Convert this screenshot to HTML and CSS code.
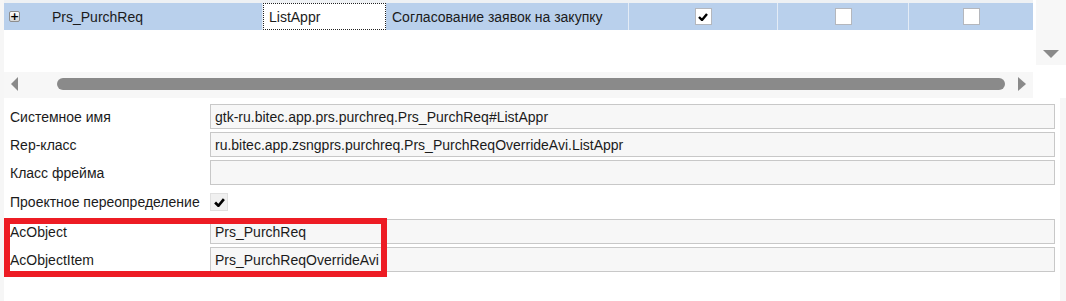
FILE: index.html
```html
<!DOCTYPE html>
<html lang="ru">
<head>
<meta charset="UTF-8" />
<title>ListAppr</title>
<link rel="stylesheet" href="styles.css">
</head>
<body>
  <div class="table">
    <div class="table-main">
      <div class="table-top"></div>
      <div class="row">
        <div class="cell cell-name">
          <span class="expander">+</span>
          <span>Prs_PurchReq</span>
        </div>
        <div class="cell cell-code">ListAppr</div>
        <div class="cell cell-caption">Согласование заявок на закупку</div>
        <div class="cell cell-check c4">
          <span class="check"><svg viewBox="0 0 10 8" width="10" height="8"><path d="M1 4 L4 7 L9 1" fill="none" stroke="#000" stroke-width="2.4"/></svg></span>
        </div>
        <div class="cell cell-check c5"><span class="check"></span></div>
        <div class="cell cell-check c6"><span class="check"></span></div>
      </div>
      <div class="table-empty"></div>
      <div class="hscroll">
        <span class="arrow arrow-left"></span>
        <div class="thumb"></div>
        <span class="arrow arrow-right"></span>
      </div>
    </div>
    <div class="vscroll">
      <div class="vscroll-track"><span class="arrow arrow-down"></span></div>
    </div>
  </div>

  <div class="form">
    <div class="form-row">
      <label>Системное имя</label>
      <div class="field">gtk-ru.bitec.app.prs.purchreq.Prs_PurchReq#ListAppr</div>
    </div>
    <div class="form-row">
      <label>Rep-класс</label>
      <div class="field">ru.bitec.app.zsngprs.purchreq.Prs_PurchReqOverrideAvi.ListAppr</div>
    </div>
    <div class="form-row">
      <label>Класс фрейма</label>
      <div class="field"></div>
    </div>
    <div class="form-row row-check">
      <label>Проектное переопределение</label>
      <span class="flag"><svg viewBox="0 0 10 8" width="11" height="9"><path d="M1 4 L4 7 L9 1" fill="none" stroke="#000" stroke-width="2.4"/></svg></span>
    </div>
    <div class="form-row">
      <label>AcObject</label>
      <div class="field">Prs_PurchReq</div>
    </div>
    <div class="form-row">
      <label>AcObjectItem</label>
      <div class="field">Prs_PurchReqOverrideAvi</div>
    </div>
    <div class="highlight"></div>
  </div>
</body>
</html>
```

FILE: styles.css
```css
:root {
  --row-blue: #b9d0ec;
  --field-bg: #f7f7f7;
  --field-border: #c8c8c8;
  --scroll: #8a8a8a;
  --mark-red: #ed1c24;
}
body {
  margin: 0;
  font-family: 'Liberation Sans', Arial, sans-serif;
  font-size: 14px;
  color: #1b1b1b;
  background: #f6f6f6;
  width: 1066px;
  height: 301px;
  overflow: hidden;
}
.table {
  display: flex;
  height: 98px;
}
.table-main {
  width: 1029px;
  margin-left: 4px;
  background: #fff;
  display: flex;
  flex-direction: column;
}
.table-top {
  height: 3px;
  background: #eef1f4;
}
.row {
  display: flex;
  height: 27px;
  background: var(--row-blue);
}
.cell {
  display: flex;
  align-items: center;
  border-right: 1px solid #e4ecf6;
  box-sizing: border-box;
}
.cell-name { width: 259px; padding-left: 5px; }
.cell-name span:last-child { margin-left: 32px; }
.cell-code {
  width: 123px;
  background: #fff;
  border: 1px dotted #222;
  padding-left: 5px;
}
.cell-caption { width: 243px; padding-left: 6px; }
.cell-check { justify-content: center; }
.c4 { width: 149px; }
.c5 { width: 131px; }
.c6 { width: 124px; border-right: none; }
.expander {
  width: 9px;
  height: 9px;
  border: 1px solid #8d8d8d;
  border-radius: 2px;
  background: linear-gradient(#fdfdfd, #d6d6d6);
  font: bold 11px/9px 'DejaVu Sans', sans-serif;
  text-align: center;
  color: #000;
}
.check {
  width: 15px;
  height: 15px;
  background: #fff;
  border: 1px solid #b4b7bd;
  display: flex;
  align-items: center;
  justify-content: center;
}
.table-empty {
  height: 42px;
}
.hscroll {
  flex: 1;
  background: var(--field-bg);
  display: flex;
  align-items: center;
  padding: 0 7px;
  padding-bottom: 3px;
}
.thumb {
  flex: 1;
  height: 12px;
  border-radius: 6px;
  background: var(--scroll);
  margin: 0 13px 0 39px;
}
.arrow {
  width: 0;
  height: 0;
  border-style: solid;
  border-color: transparent;
}
.arrow-left {
  border-width: 7px 7px 7px 0;
  border-right-color: var(--scroll);
}
.arrow-right {
  border-width: 7px 0 7px 8px;
  border-left-color: var(--scroll);
}
.arrow-down {
  border-width: 8px 8px 0 8px;
  border-top-color: var(--scroll);
}
.vscroll {
  flex: 1;
  display: flex;
  flex-direction: column;
  background: #fff;
}
.vscroll-track {
  height: 65px;
  margin-left: 3px;
  background: var(--field-bg);
  display: flex;
  justify-content: center;
  padding-top: 50px;
  box-sizing: border-box;
}
.form {
  position: relative;
  margin: 0 6px 0 4px;
  height: 203px;
  background: #fff;
  padding-top: 6px;
  box-sizing: border-box;
  display: flex;
  flex-direction: column;
  gap: 3px;
}
.form-row {
  display: flex;
  align-items: center;
  height: 25px;
}
.form-row label {
  width: 206px;
  padding-left: 6px;
  box-sizing: border-box;
  white-space: nowrap;
}
.field {
  flex: 1;
  height: 100%;
  margin-right: 5px;
  background: var(--field-bg);
  border: 1px solid var(--field-border);
  box-sizing: border-box;
  padding-left: 4px;
  display: flex;
  align-items: center;
}
.row-check {
  height: 28px;
}
.flag {
  width: 18px;
  height: 18px;
  background: #f0f0f0;
  border: 1px solid #e0e0e0;
  box-sizing: border-box;
  display: flex;
  align-items: center;
  justify-content: center;
}
.highlight {
  position: absolute;
  left: 0;
  top: 120px;
  width: 383px;
  height: 59px;
  border: 6px solid var(--mark-red);
  box-sizing: border-box;
}
```
